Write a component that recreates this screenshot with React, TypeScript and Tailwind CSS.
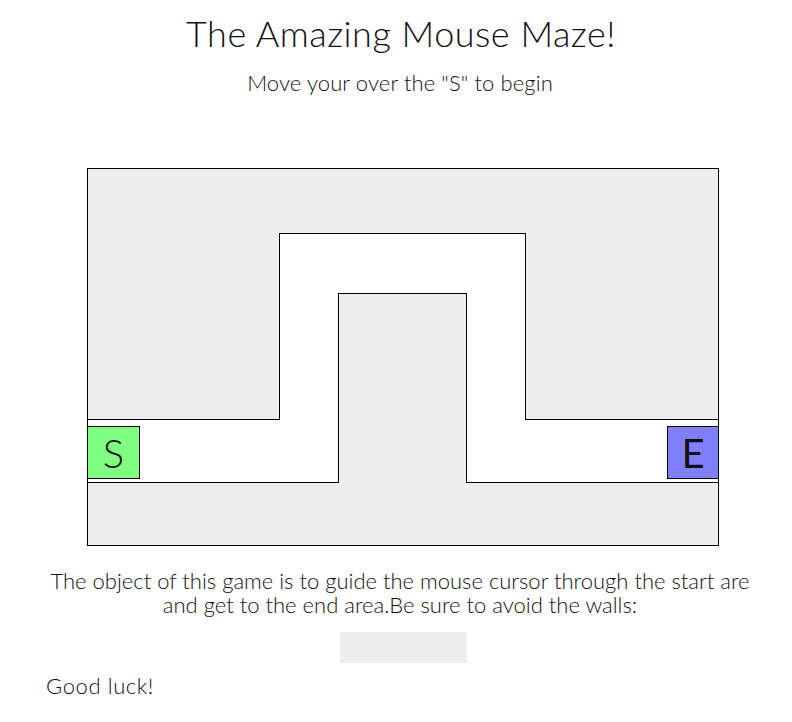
import React from "react";

export default function App() {
  return (
    <div
      className="w-[792px] h-[722px] bg-white text-[#111] overflow-hidden"
      style={{ fontFamily: "Lato, 'DejaVu Sans', sans-serif" }}
    >
      <h1 className="text-center text-[36px] leading-[44px] font-light pt-[11px] pl-[10px] tracking-[0.5px]">
        The Amazing Mouse Maze!
      </h1>
      <p className="text-center text-[22px] leading-[26px] font-light mt-[15px] pl-[8px] tracking-[0.1px]">
        Move your over the "S" to begin
      </p>

      <div className="ml-[87px] mt-[72px] relative w-[632px] h-[378px] border border-black bg-[#eeeeee]">
        {/* corridor */}
        <div className="absolute left-0 top-[250px] w-[630px] h-[64px] bg-white border-t border-b border-black" />
        {/* U channel */}
        <div className="absolute left-[191px] top-[64px] w-[247px] h-[187px] bg-white border-l border-t border-r border-black" />
        {/* inner block */}
        <div className="absolute left-[250px] top-[124px] w-[129px] h-[190px] bg-[#eeeeee] border-l border-t border-r border-black" />
        {/* start */}
        <div className="absolute left-[-1px] top-[257px] w-[53px] h-[53px] bg-[#80ff80] border border-black flex items-center justify-center text-[40px] font-light leading-none">
          S
        </div>
        {/* end */}
        <div className="absolute left-[579px] top-[257px] w-[52px] h-[53px] bg-[#8080ff] border border-black flex items-center justify-center text-[40px] leading-none">
          E
        </div>
      </div>

      <p className="text-center text-[22px] leading-[24px] font-light mt-[23px] pl-[8px]">
        The object of this game is to guide the mouse cursor through the start are
        <br />
        and get to the end area.Be sure to avoid the walls:
      </p>
      <div className="ml-[340px] mt-[15px] w-[127px] h-[31px] bg-[#eeeeee]" />
      <p className="pl-[46px] mt-[11px] text-[22px] leading-[24px] font-light tracking-[0.6px]">Good luck!</p>
    </div>
  );
}
